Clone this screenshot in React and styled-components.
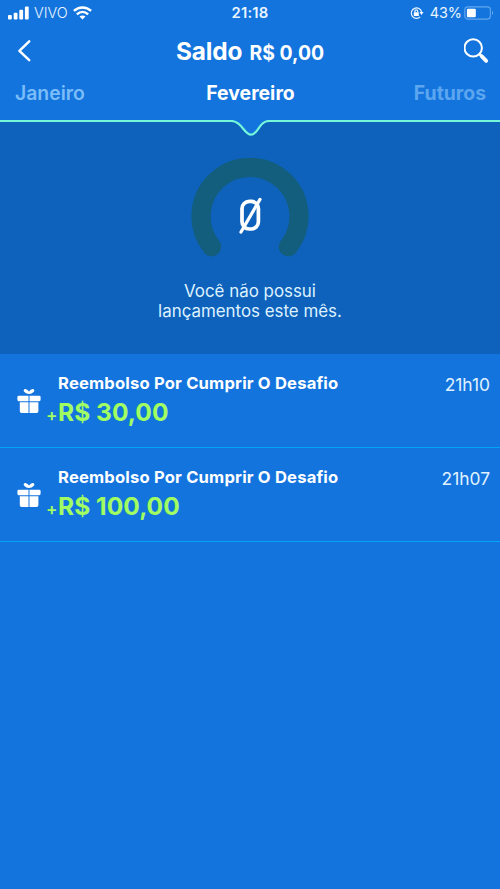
import React from 'react';
import styled, { createGlobalStyle } from 'styled-components';

const GlobalStyle = createGlobalStyle`
  * {
    box-sizing: border-box;
  }

  body {
    margin: 0;
    background: #1374de;
    font-family: Inter, "Liberation Sans", sans-serif;
    color: #fff;
  }

  svg {
    display: block;
    flex-shrink: 0;
  }
`;

const Screen = styled.main`
  display: flex;
  flex-direction: column;
  width: 500px;
  height: 889px;
  overflow: hidden;
  background: #1374de;
`;

const StatusBar = styled.div`
  display: grid;
  grid-template-columns: 1fr auto 1fr;
  align-items: center;
  height: 25px;
  padding: 0 6px 0 8px;
`;

const StatusGroup = styled.div`
  display: flex;
  align-items: center;
  justify-content: ${props => props.$end ? 'flex-end' : 'flex-start'};
`;

const StatusText = styled.span`
  font-size: ${props => props.$size || '14.4px'};
  line-height: 18px;
  font-weight: ${props => props.$weight || 400};
  letter-spacing: ${props => props.$spacing || '0'};
  margin: ${props => props.$margin || '0'};
  color: #eaf5ff;
`;

const TitleBar = styled.header`
  display: flex;
  align-items: center;
  justify-content: space-between;
  height: 52px;
  padding: 0 10px 0 17px;
`;

const Title = styled.h1`
  margin: 2px 0 0 4px;
  font-size: 24.4px;
  line-height: 30px;
  font-weight: 700;
  letter-spacing: -0.1px;
  white-space: pre;
`;

const Balance = styled.span`
  margin-left: 7px;
  font-size: 19.4px;
  letter-spacing: 0;
`;

const Tabs = styled.nav`
  display: grid;
  grid-template-columns: 1fr auto 1fr;
  height: 43px;
  padding: 4px 14px 0 15px;
`;

const Tab = styled.span`
  font-size: 19.4px;
  line-height: 24px;
  font-weight: ${props => props.$weight || 600};
  text-align: ${props => props.$align || 'center'};
  color: ${props => props.$color || '#fff'};
`;

const Summary = styled.section`
  height: 234px;
  background: #0e62bc;
`;

const Gauge = styled.svg`
  margin: 20px auto 0;
`;

const EmptyMessage = styled.p`
  margin: 23px 0 0;
  font-size: 16.9px;
  line-height: 20px;
  text-align: center;
  color: #def2ff;
`;

const Entry = styled.article`
  display: flex;
  height: 94px;
  padding: 18px 10px 0 17px;
  border-bottom: 1px solid #00a4fa;
`;

const EntryIcon = styled.div`
  width: 29px;
  padding-top: 16px;
`;

const EntryBody = styled.div`
  flex: 1;
`;

const Description = styled.h2`
  margin: 0 0 0 12px;
  font-size: 16.6px;
  line-height: 22px;
  font-weight: 700;
  letter-spacing: 0.18px;
`;

const Amount = styled.div`
  display: flex;
  align-items: baseline;
  margin-top: 2px;
  font-size: 24.6px;
  line-height: 32px;
  font-weight: 700;
  color: #a0fd62;
`;

const Sign = styled.span`
  width: 12px;
  padding-bottom: 1px;
  font-size: 17px;
  font-weight: 600;
`;

const Time = styled.time`
  padding-top: 2px;
  font-size: 17.4px;
  line-height: 22px;
  color: #e0f2ff;
`;

const SignalIcon = () => (
  <svg width="21" height="14" viewBox="0 0 21 14" fill="#fff">
    <rect x="0" y="9" width="3.8" height="4.4" rx="1" />
    <rect x="5.7" y="6.7" width="3.8" height="6.7" rx="1" />
    <rect x="11.3" y="3.7" width="3.8" height="9.7" rx="1" />
    <rect x="16.9" y="0.5" width="3.8" height="12.9" rx="1" />
  </svg>
);

const WifiIcon = () => (
  <svg width="19" height="14" viewBox="0 0 19 14" fill="none" stroke="#fff" strokeWidth="2.5">
    <path d="M.9 4.9C5.8 .3 13.2 .3 18.1 4.9" />
    <path d="M3.9 8.3c3.3-3 7.9-3 11.2 0" />
    <path d="M6.5 10.6c1.7-1.5 4.3-1.5 6 0L9.5 13.5z" fill="#fff" stroke="none" />
  </svg>
);

const RotationLockIcon = () => (
  <svg width="14" height="14" viewBox="0 0 14 14" fill="none" stroke="#eaf5ff" strokeWidth="1.2">
    <path d="M10.2 10.8A5.2 5.2 0 1 1 11.6 6" />
    <path d="M9.5 6h4l-2 2.9z" fill="#fff" stroke="none" />
    <rect x="3.8" y="6.2" width="5" height="3.9" rx=".5" fill="#fff" stroke="none" />
    <path d="M4.9 6.4V5.2a1.4 1.4 0 0 1 2.8 0v1.2" />
  </svg>
);

const BatteryIcon = () => (
  <svg width="30" height="14" viewBox="0 0 30 14">
    <rect x=".8" y=".9" width="25.6" height="12.2" rx="3" fill="none" stroke="#64a8ee" strokeWidth="1.1" />
    <rect x="2.9" y="2.7" width="8.9" height="8.6" rx="1.2" fill="#fff" />
    <path d="M28 4.8q2.4 2.1 0 4.2z" fill="#64a8ee" />
  </svg>
);

const BackIcon = () => (
  <svg width="15" height="24" viewBox="0 0 15 24" fill="none" stroke="#fff" strokeWidth="2.5" strokeLinecap="round" strokeLinejoin="round">
    <path d="M12.2 2.4 2.4 11.8l9.8 9.4" />
  </svg>
);

const SearchIcon = () => (
  <svg width="26" height="26" viewBox="0 0 26 26" fill="none" stroke="#fff" strokeLinecap="round">
    <circle cx="9.2" cy="9.9" r="8.7" strokeWidth="2" />
    <path d="m15.7 16.3 1.8 1.8" strokeWidth="2.6" />
    <path d="m17.6 18.2 4.6 4.6" strokeWidth="3.8" />
  </svg>
);

const TabPointer = () => (
  <svg width="500" height="18" viewBox="0 0 500 18">
    <path d="M0 0H500V1H268C260 1 257 14.7 251 14.7S242 1 231 1H0z" fill="#1374de" />
    <path d="M0 1H231C242 1 244 14.7 251 14.7S259 1 269 1H500" fill="none" stroke="#75f7da" strokeWidth="2.2" />
  </svg>
);

const EmptyGauge = () => (
  <Gauge width="118" height="100" viewBox="0 0 118 100" fill="none">
    <path d="M20.6 88.8A49 49 0 1 1 97.4 88.8" stroke="#125e7c" strokeWidth="19.2" strokeLinecap="round" />
    <rect x="51" y="43.4" width="16.4" height="27.6" rx="7.2" stroke="#fff" strokeWidth="3.7" />
    <path d="M50 74 69 41.4" stroke="#fff" strokeWidth="3.2" strokeLinecap="round" />
  </Gauge>
);

const GiftIcon = () => (
  <svg width="24" height="27" viewBox="0 0 24 27" fill="#fff">
    <path d="M7.2 1.2q2.5-1.2 4.8 2.3 2.3-3.5 4.8-2.3 1.4 1.3-.2 2.9-1.8 2-4.6 2T7.4 4.1Q5.8 2.5 7.2 1.2z" />
    <path d="M1.8 7.7h9.7v5.5H1.8q-1.4 0-1.4-1.4V9.1q0-1.4 1.4-1.4zM12.5 7.7h9.7q1.4 0 1.4 1.4v2.7q0 1.4-1.4 1.4h-9.7z" />
    <path d="M2.8 14.2h8.7V25H4.6q-1.8 0-1.8-1.8zM12.5 14.2h8.9v9q0 1.8-1.8 1.8h-7.1z" />
  </svg>
);

const entries = [
  { description: 'Reembolso Por Cumprir O Desafio', amount: 'R$ 30,00', time: '21h10' },
  { description: 'Reembolso Por Cumprir O Desafio', amount: 'R$ 100,00', time: '21h07' },
];

const App = () => {
  return (
    <>
      <GlobalStyle />
      <Screen>
        <StatusBar>
          <StatusGroup>
            <SignalIcon />
            <StatusText $weight={300} $margin="0 5px 0 5px">VIVO</StatusText>
            <WifiIcon />
          </StatusGroup>
          <StatusText $weight={600} $size="14.8px" $spacing="0.25px" $margin="0 2px 0 0">21:18</StatusText>
          <StatusGroup $end>
            <RotationLockIcon />
            <StatusText $margin="0 2px 0 6px">43%</StatusText>
            <BatteryIcon />
          </StatusGroup>
        </StatusBar>
        <TitleBar>
          <BackIcon />
          <Title>
            Saldo<Balance>R$ 0,00</Balance>
          </Title>
          <SearchIcon />
        </TitleBar>
        <Tabs>
          <Tab $align="left" $color="#7abdf8">Janeiro</Tab>
          <Tab $weight={700}>Fevereiro</Tab>
          <Tab $weight={700} $align="right" $color="#5ca6f0">Futuros</Tab>
        </Tabs>
        <Summary>
          <TabPointer />
          <EmptyGauge />
          <EmptyMessage>
            Você não possui
            <br />
            lançamentos este mês.
          </EmptyMessage>
        </Summary>
        {entries.map(entry => (
          <Entry key={entry.time}>
            <EntryIcon>
              <GiftIcon />
            </EntryIcon>
            <EntryBody>
              <Description>{entry.description}</Description>
              <Amount>
                <Sign>+</Sign>
                {entry.amount}
              </Amount>
            </EntryBody>
            <Time>{entry.time}</Time>
          </Entry>
        ))}
      </Screen>
    </>
  );
};

export default App;
